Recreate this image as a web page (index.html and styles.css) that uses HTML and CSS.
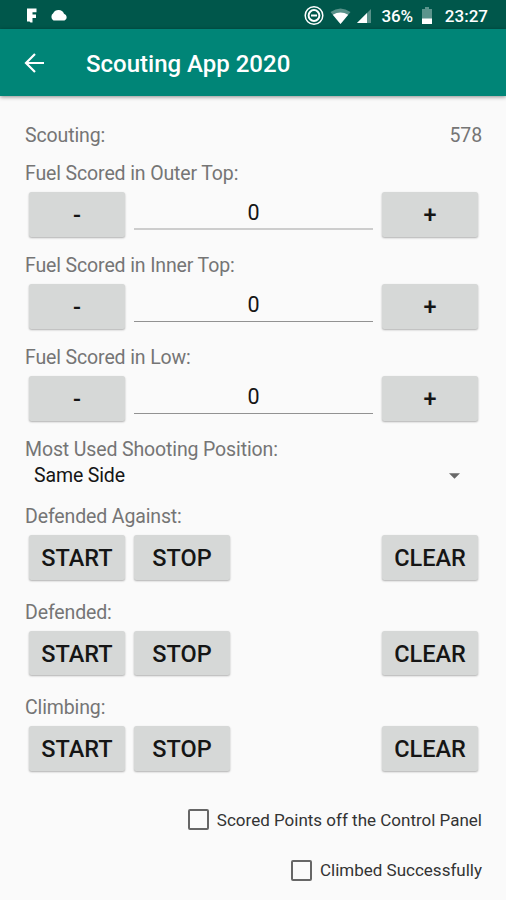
FILE: index.html
```html
<!DOCTYPE html>
<html lang="en">
<head>
<meta charset="utf-8">
<title>Scouting App 2020</title>
<link rel="stylesheet" href="styles.css">
</head>
<body>
<div class="status">
  <svg class="notices" width="46" height="20" viewBox="0 0 46 20" fill="#fff">
    <path d="M1 2.500h9.500v3.800H6.500v2.200h3.500v3.500H6.500v4.500H4.500l-1-1H1z"/>
    <path d="M28.500 14.500a4.300 4.300 0 0 1-.3-7.200 6 6 0 0 1 10.800 .4 3.600 3.600 0 0 1 .5 6.800z" transform="translate(-1 0)"/>
  </svg>
  <svg class="signals" width="70" height="22" viewBox="0 0 70 22">
    <g fill="none" stroke="#fff"><circle cx="10" cy="10.500" r="8.800" stroke-width="1.500"/><circle cx="10" cy="10.500" r="5.400" stroke-width="2"/><path d="M7 10.500h6" stroke-width="2"/></g>
    <path d="M26.500 7Q36.500 0 46.500 7L36.500 19z" fill="#fff" opacity=".35"/>
    <path d="M28.800 9.800Q36.500 5 44.200 9.800L36.500 19z" fill="#fff"/>
    <path d="M53 18 67 4v14z" fill="#fff" opacity=".35"/><path d="M53 18 63 8v10z" fill="#fff"/>
  </svg>
  <span class="percent">36%</span>
  <svg class="battery" width="12" height="20" viewBox="0 0 12 20"><path d="M1 3h3V1h4v2h3v10H1z" fill="#5b948c"/><path d="M1 12.500h10V18H1z" fill="#fff"/></svg>
  <span class="time">23:27</span>
</div>
<header class="appbar">
  <svg width="22" height="22" viewBox="0 0 22 22" fill="none" stroke="#fff" stroke-width="2.200"><path d="M20 11H2.500M11 2 2 11l9 9"/></svg>
  <h1>Scouting App 2020</h1>
</header>
<main>
  <div class="line team"><span class="label">Scouting:</span><span class="label">578</span></div>
  <section class="counter">
    <div class="label">Fuel Scored in Outer Top:</div>
    <div class="row"><button>-</button><div class="field soft">0</div><button>+</button></div>
  </section>
  <section class="counter">
    <div class="label">Fuel Scored in Inner Top:</div>
    <div class="row"><button>-</button><div class="field">0</div><button>+</button></div>
  </section>
  <section class="counter">
    <div class="label">Fuel Scored in Low:</div>
    <div class="row"><button>-</button><div class="field">0</div><button>+</button></div>
  </section>
  <section class="position">
    <div class="label">Most Used Shooting Position:</div>
    <div class="select"><span>Same Side</span><svg width="11" height="6" viewBox="0 0 12 6"><path d="M0 0h12L6 6z" fill="#686868"/></svg></div>
  </section>
  <section class="timer">
    <div class="label">Defended Against:</div>
    <div class="row"><button>START</button><button>STOP</button><button class="clear">CLEAR</button></div>
  </section>
  <section class="timer">
    <div class="label">Defended:</div>
    <div class="row"><button>START</button><button>STOP</button><button class="clear">CLEAR</button></div>
  </section>
  <section class="timer">
    <div class="label">Climbing:</div>
    <div class="row"><button>START</button><button>STOP</button><button class="clear">CLEAR</button></div>
  </section>
  <div class="check"><i class="box"></i><span>Scored Points off the Control Panel</span></div>
  <div class="check"><i class="box"></i><span>Climbed Successfully</span></div>
</main>
</body>
</html>
```
FILE: styles.css
```css
* { box-sizing: border-box; }
body { margin: 0; height: 900px; overflow: hidden; background: #fafafa; font-family: Roboto, sans-serif; color: #151515; }
svg { display: block; flex: none; }
.status { height: 29px; background: #00574b; color: #fff; display: flex; align-items: center; padding: 2px 18px 0 26px; font-size: 17px; font-weight: 500; }
.signals { margin-left: auto; }
.percent { margin-left: 8px; letter-spacing: -.2px; }
.battery { margin: 0 12px 0 8px; }
.appbar { height: 67px; background: #008577; color: #fff; display: flex; align-items: center; padding-left: 24px; gap: 40px; box-shadow: 0 1px 4px rgba(0,0,0,.45); position: relative; }
.appbar h1 { margin: 0; padding-top: 2px; font-size: 24px; line-height: 30px; font-weight: 500; }
main { padding: 28px 24px 0 25px; }
.label { font-size: 19.500px; line-height: 24px; letter-spacing: -.13px; color: #757575; white-space: nowrap; }
.team { display: flex; justify-content: space-between; margin-bottom: 14px; }
.row { display: flex; gap: 9px; padding: 0 4px; }
.counter .row, .timer .row { margin-top: 6px; }
.counter { height: 92px; }
button { width: 96px; height: 44.500px; flex: none; padding: 0; border: 0; border-radius: 2.500px; background: #d6d8d7; color: #151515; font: 500 23.500px/46px Roboto, sans-serif; box-shadow: 0 1px 2px rgba(0,0,0,.3); }
.field { flex: 1; height: 38px; border-bottom: 1.500px solid #929292; text-align: center; font-size: 21.500px; line-height: 42px; }
.soft { border-bottom: 2px solid #cdcdcd; }
.position { height: 67px; }
.select { display: flex; align-items: center; justify-content: space-between; height: 24px; margin-top: 2px; padding: 0 22px 0 9px; font-size: 19.500px; letter-spacing: -.13px; line-height: 24px; }
.timer { height: 95.500px; }
.clear { margin-left: auto; }
.check { display: flex; align-items: center; justify-content: flex-end; gap: 8px; height: 24px; margin-top: 16px; font-size: 17px; color: #333; }
.check + .check { margin-top: 26.500px; }
.box { width: 21px; height: 21px; border: 2px solid #666; border-radius: 2px; }
```
